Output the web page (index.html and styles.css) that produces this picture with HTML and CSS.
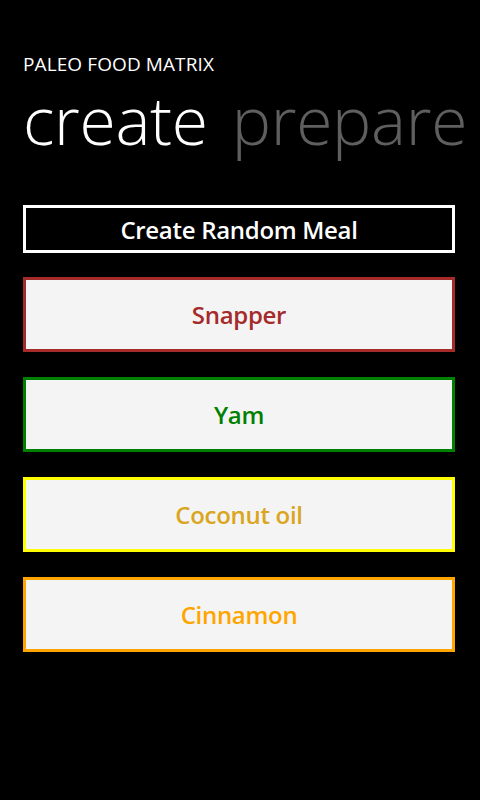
FILE: index.html
```html
<!DOCTYPE html>
<html lang="en">
<head>
    <meta charset="UTF-8">
    <meta name="viewport" content="width=device-width, initial-scale=1.0">
    <title>Paleo Food Matrix</title>
    <link rel="stylesheet" href="styles.css">
</head>
<body>
    <header class="header">
        <h1 class="app-title">PALEO FOOD MATRIX</h1>
        <div class="pivot">
            <span class="pivot-item active">create</span>
            <span class="pivot-item">prepare</span>
        </div>
    </header>

    <main class="content">
        <button type="button" class="random-btn">Create Random Meal</button>

        <div class="food snapper">Snapper</div>
        <div class="food yam">Yam</div>
        <div class="food coconut">Coconut oil</div>
        <div class="food cinnamon">Cinnamon</div>
    </main>
</body>
</html>
```

FILE: styles.css
```css
html, body {
    margin: 0;
    padding: 0;
}
body {
    background-color: #000;
    color: #fff;
    width: 480px;
    height: 800px;
    overflow: hidden;
    font-family: "Open Sans", "Noto Sans", sans-serif;
}
.header {
    padding: 52px 0 0 23px;
}
.app-title {
    margin: 0;
    font-size: 19px;
    font-weight: 400;
    line-height: 24px;
    letter-spacing: 0.1px;
}
.pivot {
    display: flex;
    gap: 24px;
    white-space: nowrap;
    margin-top: 4px;
    font-size: 66px;
    font-weight: 300;
    line-height: 78px;
    letter-spacing: -0.3px;
}
.pivot-item {
    color: #5f5f5f;
}
.pivot-item.active {
    color: #fff;
}
.content {
    display: flex;
    flex-direction: column;
    gap: 24px;
    padding: 47px 25px 0 23px;
}
.random-btn {
    height: 48px;
    background: #000;
    color: #fff;
    border: 3px solid #fff;
    font-family: inherit;
    font-size: 24px;
    font-weight: 600;
    letter-spacing: -0.3px;
    padding: 0;
}
.food {
    height: 75px;
    box-sizing: border-box;
    display: flex;
    align-items: center;
    justify-content: center;
    background-color: #f4f4f4;
    border: 3px solid;
    font-size: 24px;
    font-weight: 600;
    letter-spacing: -0.3px;
}
.food + .food {
    margin-top: 1px;
}
.snapper {
    color: #a52a2a;
    border-color: #a52a2a;
}
.yam {
    color: #008000;
    border-color: #008000;
}
.coconut {
    color: #daa520;
    border-color: #ffff00;
}
.cinnamon {
    color: #ffa500;
    border-color: #ffa500;
}
```
